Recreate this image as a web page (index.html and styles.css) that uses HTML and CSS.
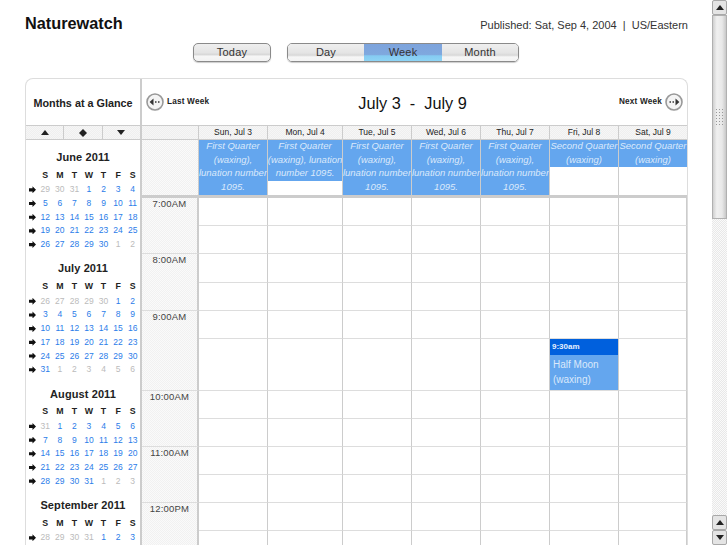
FILE: index.html
```html
<!DOCTYPE html>
<html lang="en">
<head>
<meta charset="utf-8">
<title>Naturewatch</title>
<link rel="stylesheet" href="styles.css">
</head>
<body>
<div class="page">
  <header class="top">
    <h1 class="brand">Naturewatch</h1>
    <p class="published">Published: Sat, Sep 4, 2004 &nbsp;|&nbsp; US/Eastern</p>
  </header>
  <nav class="views">
    <a class="btn btn-today">Today</a>
    <div class="seg">
      <a class="btn seg-day">Day</a><a class="btn seg-week">Week</a><a class="btn seg-month">Month</a>
    </div>
  </nav>
  <main class="panel">
    <aside class="side">
      <h2 class="side-title">Months at a Glance</h2>
      <div class="side-nav">
        <span class="side-btn"><i class="tri tri-up"></i></span>
        <span class="side-btn"><svg width="8" height="8" viewBox="0 0 9 9"><path d="M4.5 0 9 4.5 4.5 9 0 4.5z" fill="#222"/></svg></span>
        <span class="side-btn"><i class="tri tri-down"></i></span>
      </div>
      <section class="month">
        <h3>June 2011</h3>
        <table>
          <tr><th></th><th>S</th><th>M</th><th>T</th><th>W</th><th>T</th><th>F</th><th>S</th></tr>
          <tr><td class="go"></td><td class="off">29</td><td class="off">30</td><td class="off">31</td><td>1</td><td>2</td><td>3</td><td>4</td></tr>
          <tr><td class="go"></td><td>5</td><td>6</td><td>7</td><td>8</td><td>9</td><td>10</td><td>11</td></tr>
          <tr><td class="go"></td><td>12</td><td>13</td><td>14</td><td>15</td><td>16</td><td>17</td><td>18</td></tr>
          <tr><td class="go"></td><td>19</td><td>20</td><td>21</td><td>22</td><td>23</td><td>24</td><td>25</td></tr>
          <tr><td class="go"></td><td>26</td><td>27</td><td>28</td><td>29</td><td>30</td><td class="off">1</td><td class="off">2</td></tr>
        </table>
      </section>
      <section class="month">
        <h3>July 2011</h3>
        <table>
          <tr><th></th><th>S</th><th>M</th><th>T</th><th>W</th><th>T</th><th>F</th><th>S</th></tr>
          <tr><td class="go"></td><td class="off">26</td><td class="off">27</td><td class="off">28</td><td class="off">29</td><td class="off">30</td><td>1</td><td>2</td></tr>
          <tr><td class="go"></td><td>3</td><td>4</td><td>5</td><td>6</td><td>7</td><td>8</td><td>9</td></tr>
          <tr><td class="go"></td><td>10</td><td>11</td><td>12</td><td>13</td><td>14</td><td>15</td><td>16</td></tr>
          <tr><td class="go"></td><td>17</td><td>18</td><td>19</td><td>20</td><td>21</td><td>22</td><td>23</td></tr>
          <tr><td class="go"></td><td>24</td><td>25</td><td>26</td><td>27</td><td>28</td><td>29</td><td>30</td></tr>
          <tr><td class="go"></td><td>31</td><td class="off">1</td><td class="off">2</td><td class="off">3</td><td class="off">4</td><td class="off">5</td><td class="off">6</td></tr>
        </table>
      </section>
      <section class="month">
        <h3>August 2011</h3>
        <table>
          <tr><th></th><th>S</th><th>M</th><th>T</th><th>W</th><th>T</th><th>F</th><th>S</th></tr>
          <tr><td class="go"></td><td class="off">31</td><td>1</td><td>2</td><td>3</td><td>4</td><td>5</td><td>6</td></tr>
          <tr><td class="go"></td><td>7</td><td>8</td><td>9</td><td>10</td><td>11</td><td>12</td><td>13</td></tr>
          <tr><td class="go"></td><td>14</td><td>15</td><td>16</td><td>17</td><td>18</td><td>19</td><td>20</td></tr>
          <tr><td class="go"></td><td>21</td><td>22</td><td>23</td><td>24</td><td>25</td><td>26</td><td>27</td></tr>
          <tr><td class="go"></td><td>28</td><td>29</td><td>30</td><td>31</td><td class="off">1</td><td class="off">2</td><td class="off">3</td></tr>
        </table>
      </section>
      <section class="month">
        <h3>September 2011</h3>
        <table>
          <tr><th></th><th>S</th><th>M</th><th>T</th><th>W</th><th>T</th><th>F</th><th>S</th></tr>
          <tr><td class="go"></td><td class="off">28</td><td class="off">29</td><td class="off">30</td><td class="off">31</td><td>1</td><td>2</td><td>3</td></tr>
        </table>
      </section>
    </aside>
    <div class="week">
      <div class="week-head">
        <a class="pager">
          <svg width="18" height="18" viewBox="0 0 18 18"><circle cx="9" cy="9" r="8" fill="#f4f4f4" stroke="#999" stroke-width="1.6"/><path d="M7.5 5.6V12.4L3.6 9z" fill="#333"/><path d="M9 9h1.5M12 9h1.5" stroke="#333" stroke-width="1.4"/></svg>
          <span>Last Week</span>
        </a>
        <div class="range">July 3 &nbsp;-&nbsp; July 9</div>
        <a class="pager">
          <span>Next Week</span>
          <svg width="18" height="18" viewBox="0 0 18 18"><circle cx="9" cy="9" r="8" fill="#f4f4f4" stroke="#999" stroke-width="1.6"/><path d="M10.5 5.6V12.4L14.4 9z" fill="#333"/><path d="M4.5 9H6M7.5 9H9" stroke="#333" stroke-width="1.4"/></svg>
        </a>
      </div>
      <div class="cols day-heads">
        <div class="dh dh-corner"></div>
        <div class="dh">Sun, Jul 3</div><div class="dh">Mon, Jul 4</div><div class="dh">Tue, Jul 5</div><div class="dh">Wed, Jul 6</div><div class="dh">Thu, Jul 7</div><div class="dh">Fri, Jul 8</div><div class="dh">Sat, Jul 9</div>
      </div>
      <div class="cols allday">
        <div class="stipple"></div>
        <div class="ad"><p><span>First Quarter</span><span>(waxing),</span><span>lunation number</span><span>1095.</span></p></div>
        <div class="ad"><p><span>First Quarter</span><span>(waxing), lunation</span><span>number 1095.</span></p></div>
        <div class="ad"><p><span>First Quarter</span><span>(waxing),</span><span>lunation number</span><span>1095.</span></p></div>
        <div class="ad"><p><span>First Quarter</span><span>(waxing),</span><span>lunation number</span><span>1095.</span></p></div>
        <div class="ad"><p><span>First Quarter</span><span>(waxing),</span><span>lunation number</span><span>1095.</span></p></div>
        <div class="ad"><p><span>Second Quarter</span><span>(waxing)</span></p></div>
        <div class="ad"><p><span>Second Quarter</span><span>(waxing)</span></p></div>
      </div>
      <div class="cols hours">
        <div class="hour">7:00AM</div><div></div><div></div><div></div><div></div><div></div><div></div><div></div>
        <div></div><div></div><div></div><div></div><div></div><div></div><div></div>
        <div class="hour">8:00AM</div><div></div><div></div><div></div><div></div><div></div><div></div><div></div>
        <div></div><div></div><div></div><div></div><div></div><div></div><div></div>
        <div class="hour">9:00AM</div><div></div><div></div><div></div><div></div><div></div><div></div><div></div>
        <div></div><div></div><div></div><div></div><div></div>
        <div class="event"><div class="event-time">9:30am</div><div class="event-body">Half Moon (waxing)</div></div>
        <div></div>
        <div class="hour">10:00AM</div><div></div><div></div><div></div><div></div><div></div><div></div><div></div>
        <div></div><div></div><div></div><div></div><div></div><div></div><div></div>
        <div class="hour">11:00AM</div><div></div><div></div><div></div><div></div><div></div><div></div><div></div>
        <div></div><div></div><div></div><div></div><div></div><div></div><div></div>
        <div class="hour">12:00PM</div><div></div><div></div><div></div><div></div><div></div><div></div><div></div>
        <div></div><div></div><div></div><div></div><div></div><div></div><div></div>
      </div>
    </div>
  </main>
</div>
<div class="scrollbar">
  <span class="sb-btn"><i class="tri tri-up"></i></span>
  <div class="sb-thumb"><span class="sb-grip"></span></div>
  <div class="sb-track"></div>
  <span class="sb-btn"><i class="tri tri-up"></i></span>
  <span class="sb-btn"><i class="tri tri-down"></i></span>
</div>
</body>
</html>
```

FILE: styles.css
```css
* { box-sizing: border-box; }
html, body { margin: 0; height: 100%; overflow: hidden; background: #fff; }
body { display: flex; font-family: "Liberation Sans", Arial, sans-serif; color: #222; }
p, h1, h2, h3 { margin: 0; }

.page { width: 712px; height: 545px; overflow: hidden; padding: 0 24px 0 25px; flex: none; }

.top { display: flex; justify-content: space-between; align-items: baseline; padding-top: 14px; height: 43px; }
.brand { font-size: 16.3px; line-height: 19px; font-weight: bold; color: #111; }
.published { font-size: 11px; color: #333; }

.views { display: flex; gap: 16px; height: 35px; padding-left: 168px; }
.btn { display: block; height: 19px; font-size: 11px; line-height: 17px; text-align: center; color: #333; letter-spacing: 0.2px;
  background: linear-gradient(#efefef 0, #e4e4e4 50%, #d8d8d8 62%, #f6f6f6 72%, #f2f2f2 100%); }
.btn-today { width: 78px; border: 1px solid #8a8a8a; border-radius: 5px; box-shadow: 0 1px 1px #ccc; }
.seg { display: flex; width: 232px; height: 19px; border: 1px solid #8a8a8a; border-radius: 5px; overflow: hidden; box-shadow: 0 1px 1px #ccc; }
.seg .btn { height: 18px; line-height: 16px; }
.seg-day { width: 76px; }
.seg .seg-week { width: 78px; background: linear-gradient(#7da3dc 0, #7fa8de 58%, #85cbf2 66%, #8fd6f6 100%); }
.seg-month { width: 76px; }

.panel { display: flex; width: 663px; height: 467px; border: 1px solid #ddd; border-bottom: 0; border-radius: 8px 8px 0 0; overflow: hidden; }

.side { width: 116px; flex: none; border-right: 2px solid #ccc; }
.side-title { height: 46px; font-size: 10.8px; font-weight: bold; line-height: 48px; text-align: center; color: #222; white-space: nowrap; }
.side-nav { display: flex; height: 15px; border-top: 1px solid #ccc; border-bottom: 1px solid #ccc;
  background: repeating-conic-gradient(#efefef 0 25%, #f6f6f6 0 50%) 0 0 / 2px 2px; }
.side-btn { flex: 1; display: flex; align-items: center; justify-content: center; border-right: 1px solid #ccc; }
.side-btn:last-child { border-right: 0; }
.tri { display: block; width: 0; height: 0; border-left: 4.5px solid transparent; border-right: 4.5px solid transparent; }
.tri-up { border-bottom: 5px solid #222; }
.tri-down { border-top: 5px solid #222; }

.month { padding: 9px 0 0; }
.month h3 { font-size: 11px; line-height: 16px; font-weight: bold; text-align: center; color: #222; letter-spacing: 0.1px; }
.month table { border-collapse: collapse; table-layout: fixed; width: 114px; margin-top: 1px; }
.month th { font-size: 8.8px; font-weight: bold; height: 17px; padding: 0; color: #222; }
.month td { font-size: 8.5px; height: 13.7px; line-height: 13px; padding: 0; text-align: center; color: #2b7de9; }
.month th:first-child, .month td.go { width: 12px; }
.month td.off { color: #bbb; }
.month td.go::before { content: ""; display: block; width: 7px; height: 7px; margin-left: 3px; background: #111;
  clip-path: polygon(0 28%, 50% 28%, 50% 0, 100% 50%, 50% 100%, 50% 72%, 0 72%); }

.week { flex: 1; min-width: 0; }
.week-head { display: flex; align-items: center; justify-content: space-between; height: 46px; padding: 0 4px; }
.pager { display: flex; align-items: center; gap: 3px; font-size: 8.2px; font-weight: bold; letter-spacing: 0.2px; color: #222; margin-top: -1px; }
.range { font-size: 16.3px; color: #111; margin: 3px 0 0 -3px; }

.cols { display: grid; grid-template-columns: 57px 69px 75px 69px 69px 69px 69px 68px; }
.day-heads { height: 15px; border-top: 1px solid #ccc; border-bottom: 1px solid #ccc;
  background: repeating-conic-gradient(#efefef 0 25%, #f6f6f6 0 50%) 0 0 / 2px 2px; }
.dh { font-size: 8.5px; line-height: 12px; text-align: center; border-right: 1px solid #ccc; color: #222; }
.dh:last-child { border-right: 0; }

.allday { height: 58px; border-bottom: 3px solid #ccc; }
.stipple, .hour { background: repeating-conic-gradient(#f1f1f1 0 25%, #fafafa 0 50%) 0 0 / 2px 2px; }
.stipple { border-right: 1px solid #ccc; }
.ad { border-right: 1px solid #ccc; overflow: hidden; }
.ad:last-child { border-right: 0; }
.ad p { background: #64a6ee; color: #dbe9fb; font-size: 9.5px; font-style: italic; line-height: 13.67px; text-align: center; padding-bottom: 1px; }
.ad span { display: block; white-space: nowrap; margin: 0 -8px; }
.ad span:first-child { margin-top: -1px; }

.hours { grid-template-rows: 28px 28px 29px 28px 28px 52px 28px 28px 28px 28px 28px 28px; }
.hours > div { border-right: 1px solid #ccc; border-bottom: 1px solid #ddd; min-width: 0; overflow: hidden; }
.hours > .hour { grid-row: span 2; border-right: 2px solid #ccc; font-size: 9.5px; line-height: 11px; text-align: center; color: #444; letter-spacing: 0.2px; }
.hours > .event { background: #64a6ee; }
.event-time { background: #0060dd; color: #e6f0ff; font-size: 8px; font-weight: bold; line-height: 16px; height: 16px; padding-left: 2px; }
.event-body { font-size: 10px; line-height: 15px; color: #dbe9fb; padding: 2px 3px; }

.scrollbar { width: 15px; height: 545px; flex: none; display: flex; flex-direction: column; background: repeating-conic-gradient(#e8e8e8 0 25%, #fafafa 0 50%) 0 0 / 2px 2px; }
.sb-btn { flex: none; height: 15px; display: flex; align-items: center; justify-content: center; background: #e4e4e4; border: 1px solid #a8a8a8; border-radius: 2px; }
.sb-thumb { flex: none; height: 204px; display: flex; align-items: center; justify-content: center; background: linear-gradient(90deg, #cfcfcf, #f0f0f0 30%, #e8e8e8 70%, #c8c8c8); border: 1px solid #b0b0b0; }
.sb-grip { width: 9px; height: 18px; background: radial-gradient(circle, #999 0.7px, transparent 1px) 0 0 / 3px 3px; }
.sb-track { flex: 1; }
```
